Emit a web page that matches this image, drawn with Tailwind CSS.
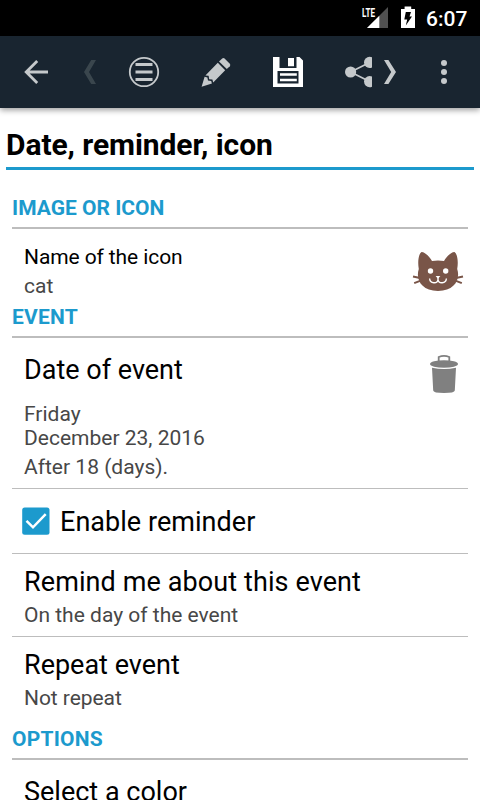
<!DOCTYPE html>
<html lang="en">
<head>
    <meta charset="UTF-8">
    <meta name="viewport" content="width=device-width, initial-scale=1.0">
    <title>Date, reminder, icon</title>
    <script src="https://cdn.jsdelivr.net/npm/@tailwindcss/browser@4"></script>
</head>
<body class="h-screen overflow-hidden bg-white font-[Roboto,sans-serif] text-black">
    <div class="flex h-full flex-col">
        <!-- Status bar -->
        <div class="flex h-9 shrink-0 items-center justify-end bg-black text-white">
            <svg class="h-9 w-[60px]" viewBox="0 0 60 36">
                <path d="M7 28L28 7V28Z" fill="#505050"/>
                <path d="M7 28L19.3 15.7V28Z" fill="#fff"/>
                <path d="M0 5H15.5V18H0Z" fill="#000"/>
                <text x="2" y="17" font-size="13.5" font-weight="700" fill="#fff" textLength="13" lengthAdjust="spacingAndGlyphs">LTE</text>
                <path d="M41 9H44.6V6.5H51.2V9H55V28H41Z" fill="#fff"/>
                <path d="M45.8 12H51L49.5 16.5H52L45.8 25.5L47.2 19.5H44.3Z" fill="#000"/>
            </svg>
            <div class="w-[60px] pt-0.5 pl-[6px] text-[21px] leading-9 font-medium">6:07</div>
        </div>

        <!-- Toolbar -->
        <div class="z-10 flex h-[72px] shrink-0 bg-[#192530] text-[#c5c9cb] shadow-[0_2px_6px_rgba(0,0,0,0.4)]">
            <button class="h-[72px] w-[72px]">
                <svg viewBox="0 0 72 72" fill="none" stroke="currentColor" stroke-width="2.8">
                    <path d="M26 36H48M37.2 25L26.2 36L37.2 47"/>
                </svg>
            </button>
            <button class="h-[72px] w-9 text-[#3a464d]">
                <svg viewBox="0 0 36 72" fill="currentColor">
                    <path d="M19.2 24H24L17 36L24 48H19.2L12 36Z"/>
                </svg>
            </button>
            <button class="h-[72px] w-[72px]">
                <svg viewBox="0 0 72 72" fill="currentColor">
                    <circle cx="36" cy="36" r="14.2" fill="none" stroke="currentColor" stroke-width="1.8"/>
                    <path d="M27.5 27H44.5V30H27.5ZM27.5 34.5H44.5V37.5H27.5ZM27.5 42H44.5V45H27.5Z"/>
                </svg>
            </button>
            <button class="h-[72px] w-[72px]">
                <svg viewBox="0 0 72 72" fill="currentColor">
                    <path d="M37.8 26.8L45.2 34.3L33.2 46.6L32.4 43.6L29.2 43.2L28.6 39.8L25.4 39.4Z"/>
                    <path d="M24.6 40.7L27.4 41.4L28 44.4L31.2 45L31.9 47.6L21.6 50.8Z"/>
                    <path d="M39 25.5L42.2 22.5Q43.4 21.6 44.6 22.5L49.8 27.8Q50.8 29 49.8 30.2L46.8 33.1Z"/>
                </svg>
            </button>
            <button class="h-[72px] w-[72px] text-white">
                <svg viewBox="0 0 72 72" fill="currentColor">
                    <path fill-rule="evenodd" d="M21 21H27.5V32H44.5V21H47.5L51 24.5V51H21ZM25.5 35V47.5H46.5V35Z"/>
                    <path d="M36 22H42V30.2H36ZM28 37.3H44.8V39.8H28ZM28 42.7H44.8V45.2H28Z"/>
                </svg>
            </button>
            <button class="h-[72px] w-12">
                <svg viewBox="0 0 48 72" fill="currentColor">
                    <circle cx="26.6" cy="36" r="5.6"/>
                    <circle cx="45.6" cy="26.4" r="5.6"/>
                    <circle cx="45.6" cy="45.6" r="5.6"/>
                    <path d="M45.6 26.4L26.6 36L45.6 45.6" fill="none" stroke="currentColor" stroke-width="1.7"/>
                </svg>
            </button>
            <button class="h-[72px] w-9">
                <svg viewBox="0 0 36 72" fill="currentColor">
                    <path d="M12 24H16.4L24 36L16.4 48H12L19.2 36Z"/>
                </svg>
            </button>
            <button class="h-[72px] w-[72px]">
                <svg viewBox="0 0 72 72" fill="currentColor">
                    <circle cx="36" cy="27" r="3"/>
                    <circle cx="36" cy="36" r="3"/>
                    <circle cx="36" cy="45" r="3"/>
                </svg>
            </button>
        </div>

        <!-- Title -->
        <h1 class="mx-1.5 h-[62px] shrink-0 border-b-3 border-[#1c9acd] pt-[19px] text-[30px] leading-9 font-bold tracking-[-0.08px]">Date, reminder, icon</h1>

        <div class="mx-3 shrink-0">
            <!-- Image or icon -->
            <h2 class="mt-[26px] h-[33px] border-b-2 border-[#bdbdbd] text-[21px] leading-6 font-bold text-[#1c9acd]">IMAGE OR ICON</h2>
            <div class="flex h-[76px] justify-between pl-3">
                <div class="pt-4 text-[21px] leading-6">
                    <p class="tracking-[-0.1px]">Name of the icon</p>
                    <p class="mt-[5px] text-[#474747]">cat</p>
                </div>
                <svg class="mt-[7px] h-[70px] w-[68px]" viewBox="0 0 68 70">
                    <g fill="#795548">
                        <path d="M21.5 16C25 16 29.5 20.5 32 25Q38 23.8 44 25C46.5 20.5 51 16 54.5 16C57.5 18 58.5 26 57.2 33C60.5 43 55 55 38 55C21 55 15.5 43 18.8 33C17.5 26 18.5 18 21.5 16Z"/>
                        <path d="M13 40.5L20 42M14.2 47.2L20 44.8M63 40.5L56 42M61.8 47.2L56 44.8" stroke="#795548" stroke-width="2"/>
                    </g>
                    <circle cx="30.5" cy="35" r="2.7" fill="#fff"/>
                    <circle cx="45.7" cy="35" r="2.7" fill="#fff"/>
                    <path d="M35.6 40H40.4L38 42.8Z" fill="#fff"/>
                    <path d="M29.6 42.5C30 48 37.5 48 38 43.5C38.5 48 46 48 46.4 42.5M38 41V44" fill="none" stroke="#fff" stroke-width="1.4"/>
                </svg>
            </div>

            <!-- Event -->
            <h2 class="h-[33px] border-b-2 border-[#bdbdbd] text-[21px] leading-6 font-bold tracking-[0.2px] text-[#1c9acd]">EVENT</h2>
            <div class="flex h-[151px] justify-between border-b border-[#bdbdbd] pl-3">
                <div class="pt-4 text-[21px] leading-6 text-[#474747]">
                    <p class="text-[27px] leading-8 text-black">Date of event</p>
                    <p class="mt-4">Friday<br>December 23, 2016</p>
                    <p class="mt-[5px]">After 18 (days).</p>
                </div>
                <svg class="mt-0.5 h-[60px] w-[58px]" viewBox="0 0 58 60" fill="#808080">
                    <path d="M28.7 21V17Q34 14.8 39.3 17V21" fill="none" stroke="#808080" stroke-width="1.8"/>
                    <ellipse cx="34" cy="24" rx="14" ry="3.8"/>
                    <path d="M22 27.8Q34 30.3 46 27.8L44.8 50.5Q44.6 53 34 53Q23.4 53 23.2 50.5Z"/>
                </svg>
            </div>
            <label class="flex h-[65px] items-center border-b border-[#bdbdbd] pl-2.5 text-[27px] leading-8">
                <svg class="mr-2.5 h-7 w-7" viewBox="0 0 28 28">
                    <rect x="0.2" y="0.5" width="27.3" height="27.3" rx="2.5" fill="#1c9acd"/>
                    <path d="M4.5 13.8L11 20.3L23.7 7.2" fill="none" stroke="#fff" stroke-width="2.5"/>
                </svg>
                <span class="pt-0.5 tracking-[0.04px]">Enable reminder</span>
            </label>
            <div class="h-[83px] border-b border-[#bdbdbd] pt-3 pl-3">
                <p class="text-[27px] leading-8 tracking-[0.1px]">Remind me about this event</p>
                <p class="mt-[5px] text-[21px] leading-6 text-[#474747]">On the day of the event</p>
            </div>
            <div class="h-[90px] pt-3 pl-3">
                <p class="text-[27px] leading-8">Repeat event</p>
                <p class="mt-[5px] text-[21px] leading-6 tracking-[-0.05px] text-[#474747]">Not repeat</p>
            </div>

            <!-- Options -->
            <h2 class="h-[33px] border-b-2 border-[#bdbdbd] text-[21px] leading-6 font-bold tracking-[0.2px] text-[#1c9acd]">OPTIONS</h2>
            <p class="pt-4 pl-3 text-[27px] leading-8">Select a color</p>
        </div>
    </div>
</body>
</html>
